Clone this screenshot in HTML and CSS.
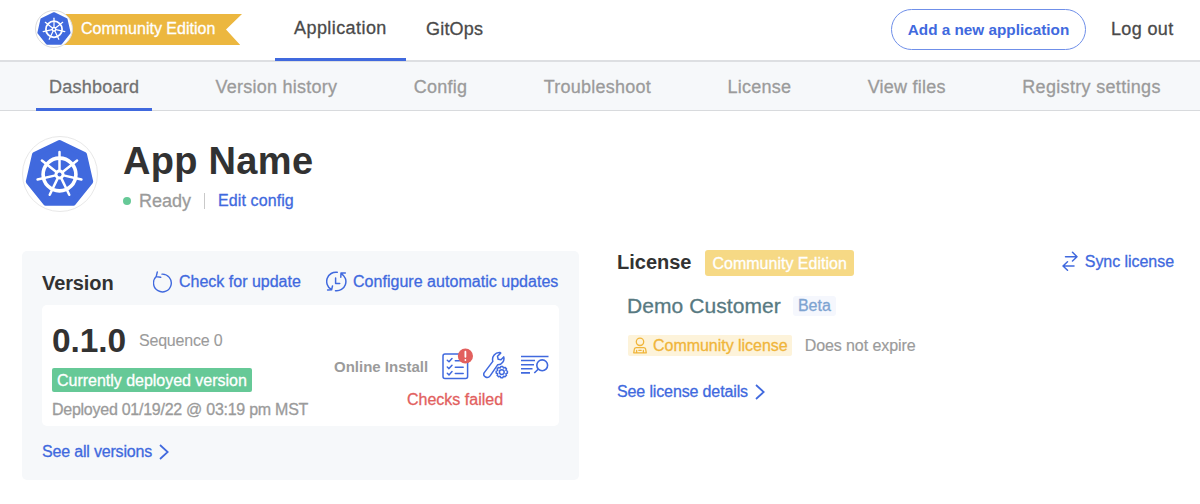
FILE: index.html
```html
<!DOCTYPE html>
<html lang="en">
<head>
<meta charset="utf-8">
<title>App Name</title>
<link rel="stylesheet" href="styles.css">
</head>
<body>
<svg class="defs" aria-hidden="true">
  <symbol id="wheel" viewBox="-40 -40 80 80">
    <path d="M0-32 25-20 31.2 7.1 13.9 28.8H-13.9L-31.2 7.1-25-20Z" fill="#4069de" stroke="#4069de" stroke-width="5" stroke-linejoin="round"/>
    <g fill="none" stroke="#fff" stroke-width="2.5" stroke-linecap="round">
      <circle r="16.4" stroke-width="3.6"/>
      <path id="spoke" d="M0-4V-22.5"/>
      <use href="#spoke" transform="rotate(51.43)"/>
      <use href="#spoke" transform="rotate(102.86)"/>
      <use href="#spoke" transform="rotate(154.29)"/>
      <use href="#spoke" transform="rotate(205.71)"/>
      <use href="#spoke" transform="rotate(257.14)"/>
      <use href="#spoke" transform="rotate(308.57)"/>
    </g>
    <circle r="5" fill="#fff"/>
    <circle r="2" fill="#4069de"/>
  </symbol>
</svg>

<header class="header">
  <div class="brand">
    <span class="logo logo-small"><svg viewBox="-36.5 -37 73 73"><use href="#wheel" x="-40" y="-40" width="80" height="80"/></svg></span>
    <span class="ribbon">Community Edition</span>
  </div>
  <nav class="main-nav">
    <a class="main-tab active">Application</a>
    <a class="main-tab gitops">GitOps</a>
  </nav>
  <a class="add-app">Add a new application</a>
  <a class="logout">Log out</a>
</header>

<nav class="subnav">
  <a class="subtab active">Dashboard</a>
  <a class="subtab">Version history</a>
  <a class="subtab">Config</a>
  <a class="subtab">Troubleshoot</a>
  <a class="subtab">License</a>
  <a class="subtab">View files</a>
  <a class="subtab registry">Registry settings</a>
</nav>

<section class="app">
  <span class="logo logo-large"><svg viewBox="-36.5 -37.5 74 74"><use href="#wheel" x="-40" y="-40" width="80" height="80"/></svg></span>
  <div class="app-info">
    <h1 class="app-name">App Name</h1>
    <div class="status-row">
      <span class="dot"></span>
      <span class="ready">Ready</span>
      <a class="link edit">Edit config</a>
    </div>
  </div>
</section>

<main class="columns">
  <section class="version-panel">
    <div class="version-head">
      <h2 class="title">Version</h2>
      <a class="link check">
        <svg width="20" height="22" viewBox="0 0 20 22" fill="none" stroke="#4069de" stroke-width="1.4" stroke-linecap="round" stroke-linejoin="round"><path d="M3.2 5.6A8.9 8.9 0 1 0 9 3.1M4.3 1 3.2 5.6 7.7 6.3"/></svg>
        <span>Check for update</span>
      </a>
      <a class="link configure">
        <svg width="21" height="21" viewBox="0 0 21 21" fill="none" stroke="#4069de" stroke-width="1.5" stroke-linecap="round" stroke-linejoin="round"><path d="M11.2 1.3A9.2 9.2 0 0 0 5 18.2M1.6 19 5.6 18.8 6.5 14.9M9.5 19.7A9.2 9.2 0 0 0 15.6 2.8M19.3 1.9 15 2.1 14.8 6.3M9.6 7V12.4H13.7"/></svg>
        <span>Configure automatic updates</span>
      </a>
    </div>
    <div class="card">
      <div class="card-info">
        <div class="number-row"><span class="number">0.1.0</span><span class="sequence">Sequence 0</span></div>
        <span class="deployed-badge">Currently deployed version</span>
        <span class="deployed-at">Deployed 01/19/22 @ 03:19 pm MST</span>
      </div>
      <div class="card-side">
        <div class="install-row">
          <span class="install">Online Install</span>
          <svg class="icon-checks" width="32" height="32" viewBox="0 0 32 32" fill="none" stroke="#4069de" stroke-width="1.5" stroke-linecap="round" stroke-linejoin="round">
            <rect x="1" y="6" width="24.6" height="24.4" rx="2"/>
            <path d="M5.3 12.2 7 13.8 10 10.5M5.3 19 7 20.6 10 17.3M5.3 25.3 7 26.9 10 23.6M13.3 12.8H17.5M13.3 19.2H21.2M13.3 25.4H21.2"/>
            <circle cx="23.4" cy="8" r="7.6" fill="#e2605e" stroke="none"/>
            <path d="M23.4 3.7V8.8M23.4 11.9V12" stroke="#fff" stroke-width="1.8"/>
          </svg>
          <svg class="icon-wrench" width="26" height="28" viewBox="0 0 26 28" fill="none" stroke="#4069de" stroke-width="1.5" stroke-linecap="round" stroke-linejoin="round">
            <path d="M14.8 13.7 7.1 24.9C4.6 28.3-.6 25.4 1.1 21.9L9.8 10.4C8.6 5.4 12.2 1.1 17.1 1.5L17.7 2.1 14.5 5.3 15.2 8.3 18 8.7 20.7 5.9C21.9 9.5 18.9 13.8 14.8 13.7Z"/>
            <circle cx="18.8" cy="21.1" r="2.4"/>
            <path d="M17.8 15.5H19.8L20.4 17 22 16.4 23.5 17.9 22.9 19.4 24.4 20.1V22.1L22.9 22.8 23.5 24.3 22 25.8 20.4 25.2 19.8 26.7H17.8L17.2 25.2 15.6 25.8 14.1 24.3 14.7 22.8 13.2 22.1V20.1L14.7 19.4 14.1 17.9 15.6 16.4 17.2 17Z"/>
          </svg>
          <svg class="icon-logs" width="28" height="20" viewBox="0 0 28 20" fill="none" stroke="#4069de" stroke-width="1.6"><path d="M0 1.5H27.5M0 5.5H14M0 9.7H13M0 13.8H11.5M0 17.9H9M13.3 18 17.4 14"/><circle cx="21.2" cy="10.3" r="5.4"/></svg>
        </div>
        <span class="failed">Checks failed</span>
      </div>
    </div>
    <a class="link see-all"><span>See all versions</span><svg width="10" height="16" viewBox="0 0 10 16" fill="none" stroke="#4069de" stroke-width="1.7"><path d="M1 1 8.7 8 1 15"/></svg></a>
  </section>

  <section class="license-panel">
    <div class="license-head">
      <h2 class="title">License</h2>
      <span class="edition-badge">Community Edition</span>
      <a class="link sync">
        <svg width="16" height="20" viewBox="0 0 16 20" fill="none" stroke="#4069de" stroke-width="1.5" stroke-linecap="round" stroke-linejoin="round"><path d="M3.5 5.8H15M10.5 1.2 15 5.8 10.5 10M12 15H1M5.5 10.8 1 15 5.5 19.2"/></svg>
        <span>Sync license</span>
      </a>
    </div>
    <div class="customer-row"><span class="customer">Demo Customer</span><span class="channel">Beta</span></div>
    <div class="type-row">
      <span class="license-type">
        <svg width="14" height="17" viewBox="0 0 14 17" fill="none" stroke="#f0b53a" stroke-width="1.3" stroke-linejoin="round" stroke-linecap="round"><circle cx="7" cy="4.8" r="3.7"/><path d="M3.3 10.6H10.7Q12.3 10.6 12.6 12L13.3 15.8H.7L1.4 12Q1.7 10.6 3.3 10.6ZM3.6 13.5V15.5M10.4 13.5V15.5M5.8 13.3H8.2"/></svg>
        <span>Community license</span>
      </span>
      <span class="expiry">Does not expire</span>
    </div>
    <a class="link see-details"><span>See license details</span><svg width="10" height="16" viewBox="0 0 10 16" fill="none" stroke="#4069de" stroke-width="1.7"><path d="M1 1 8.7 8 1 15"/></svg></a>
  </section>
</main>
</body>
</html>
```

FILE: styles.css
```css
* { box-sizing: border-box; }
body {
  margin: 0;
  width: 1200px;
  height: 504px;
  overflow: hidden;
  background: #fff;
  color: #323232;
  font: 16px/20px "Liberation Sans", Arial, sans-serif;
  -webkit-text-stroke: 0.3px;
  white-space: nowrap;
}
svg { display: block; flex: none; }
h1, h2 { margin: 0; -webkit-text-stroke: 0; }
.defs { position: absolute; width: 0; height: 0; }

.header {
  display: flex;
  align-items: flex-start;
  height: 62px;
  padding-left: 35px;
  border-bottom: 2px solid #dddfe2;
}
.brand { display: flex; width: 240px; padding-top: 10px; }
.logo {
  display: flex;
  flex: none;
  border-radius: 50%;
  background: #fff;
  border: 1px solid #e8e8e8;
}
.logo svg { width: 100%; height: 100%; }
.logo-small { z-index: 1; width: 38px; height: 38px; border: 1.5px solid #dcdcdc; }
.ribbon {
  width: 178px;
  height: 31px;
  margin: 4px 0 0 -9px;
  padding-left: 17px;
  line-height: 29px;
  color: #fff;
  background: #ecb73f;
  clip-path: polygon(0 0, 100% 0, 162px 50%, 99% 100%, 0 100%);
}
.main-nav { display: flex; font-size: 18px; color: #4a4a4a; }
.main-tab { height: 61px; line-height: 57px; letter-spacing: 0.43px; }
.main-tab.active { width: 131px; padding-left: 19px; border-bottom: 3px solid #4069de; }
.gitops { padding-left: 20px; line-height: 59px; letter-spacing: 0.2px; }
.add-app {
  width: 195px;
  height: 41px;
  margin: 9px 25px 0 auto;
  border: 1px solid #6f8fe9;
  border-radius: 21px;
  text-align: center;
  font-weight: bold;
  font-size: 15.3px;
  line-height: 40px;
  color: #4069de;
  -webkit-text-stroke: 0;
}
.logout { width: 89px; font-size: 18px; line-height: 58px; letter-spacing: 0.35px; color: #4a4a4a; }

.subnav {
  display: flex;
  gap: 50.5px;
  height: 49px;
  padding-left: 36px;
  background: #f6f8fa;
  border-bottom: 1px solid #d8dadd;
  font-size: 18px;
  line-height: 50px;
  letter-spacing: 0.24px;
  color: #9b9b9b;
}
.subtab { height: 49px; padding: 0 13px; }
.subtab.active { width: 116px; padding-right: 0; color: #717171; border-bottom: 3px solid #4069de; }
.registry { letter-spacing: 0.32px; }

.app { display: flex; height: 140px; padding: 25px 0 0 22px; }
.logo-large { width: 76px; height: 76px; }
.app-info { padding: 5px 0 0 25px; }
.app-name { font-size: 38px; line-height: 41px; letter-spacing: 0.3px; }
.status-row { display: flex; align-items: center; height: 20px; margin-top: 9px; }
.dot { width: 8px; height: 8px; border-radius: 50%; background: #66c997; }
.ready { margin-left: 8px; font-size: 18px; color: #9b9b9b; }
.edit { height: 16px; margin-left: 13px; padding-left: 13px; border-left: 1px solid #c9c9c9; line-height: 16px; letter-spacing: 0.1px; }
.link { color: #4069de; }

.columns { display: flex; }
.version-panel {
  width: 557px;
  height: 229px;
  padding: 20px;
  background: #f6f8fa;
  border-radius: 5px;
  margin-left: 22px;
}
.title { font-size: 20px; line-height: 24px; }
.version-head { display: flex; height: 34px; align-items: flex-start; }
.version-head .title { width: 111px; letter-spacing: -0.1px; }
.check { display: flex; width: 173px; gap: 6px; }
.check span, .configure span { padding-top: 1px; }
.configure { display: flex; gap: 6px; letter-spacing: 0.03px; }
.card {
  display: flex;
  justify-content: space-between;
  height: 121px;
  padding: 0 10px;
  background: #fff;
  border-radius: 5px;
}
.card-info { display: flex; flex-direction: column; align-items: flex-start; padding-top: 18px; }
.number-row { display: flex; align-items: center; height: 35px; }
.number { width: 87px; font-size: 33.5px; font-weight: bold; letter-spacing: -0.1px; -webkit-text-stroke: 0; }
.sequence { color: #9b9b9b; letter-spacing: -0.2px; -webkit-text-stroke: 0.1px; }
.deployed-badge {
  height: 24px;
  margin-top: 10px;
  padding: 0 5px;
  border-radius: 2px;
  background: #66c997;
  color: #fff;
  line-height: 25px;
  letter-spacing: -0.02px;
}
.deployed-at { margin-top: 8px; color: #9b9b9b; letter-spacing: -0.26px; }
.card-side { display: flex; flex-direction: column; padding-top: 43px; }
.install-row { display: flex; height: 32px; }
.install { width: 108px; padding-top: 9px; font-size: 15px; font-weight: bold; color: #9b9b9b; -webkit-text-stroke: 0; }
.icon-wrench { margin: 3px 0 0 9px; }
.icon-logs { margin: 7px 0 0 12px; }
.failed { margin: 10px 0 0 73px; color: #e2605e; }
.see-all, .see-details { display: flex; align-items: center; gap: 7px; letter-spacing: -0.18px; }
.see-all { margin-top: 16px; }

.license-panel { width: 557px; margin-left: 38px; }
.license-head { display: flex; }
.license-head .title { width: 88px; line-height: 22px; }
.edition-badge {
  height: 26px;
  margin-top: -1px;
  padding: 0 7.5px;
  border-radius: 3px;
  background: #f6d985;
  color: #fff;
  line-height: 28px;
}
.sync { display: flex; gap: 7px; margin-left: auto; letter-spacing: -0.05px; }
.sync span { padding-top: 1px; }
.customer-row { display: flex; align-items: center; gap: 12px; margin: 19px 0 0 10px; height: 22px; }
.customer { font-size: 21px; letter-spacing: 0.08px; color: #577981; }
.channel { height: 20px; padding: 0 5px; border-radius: 3px; background: #f5f7fd; color: #7ea3d1; line-height: 20px; }
.type-row { display: flex; align-items: center; gap: 13px; height: 21px; margin: 18px 0 0 11px; }
.license-type { display: flex; align-items: center; gap: 6px; height: 21px; padding: 0 4px 0 5px; border-radius: 2px; background: #fdf3da; color: #f0b53a; letter-spacing: -0.03px; }
.expiry { letter-spacing: -0.08px; color: #9b9b9b; -webkit-text-stroke: 0.2px; }
.see-details { margin-top: 26px; letter-spacing: -0.13px; }
```
